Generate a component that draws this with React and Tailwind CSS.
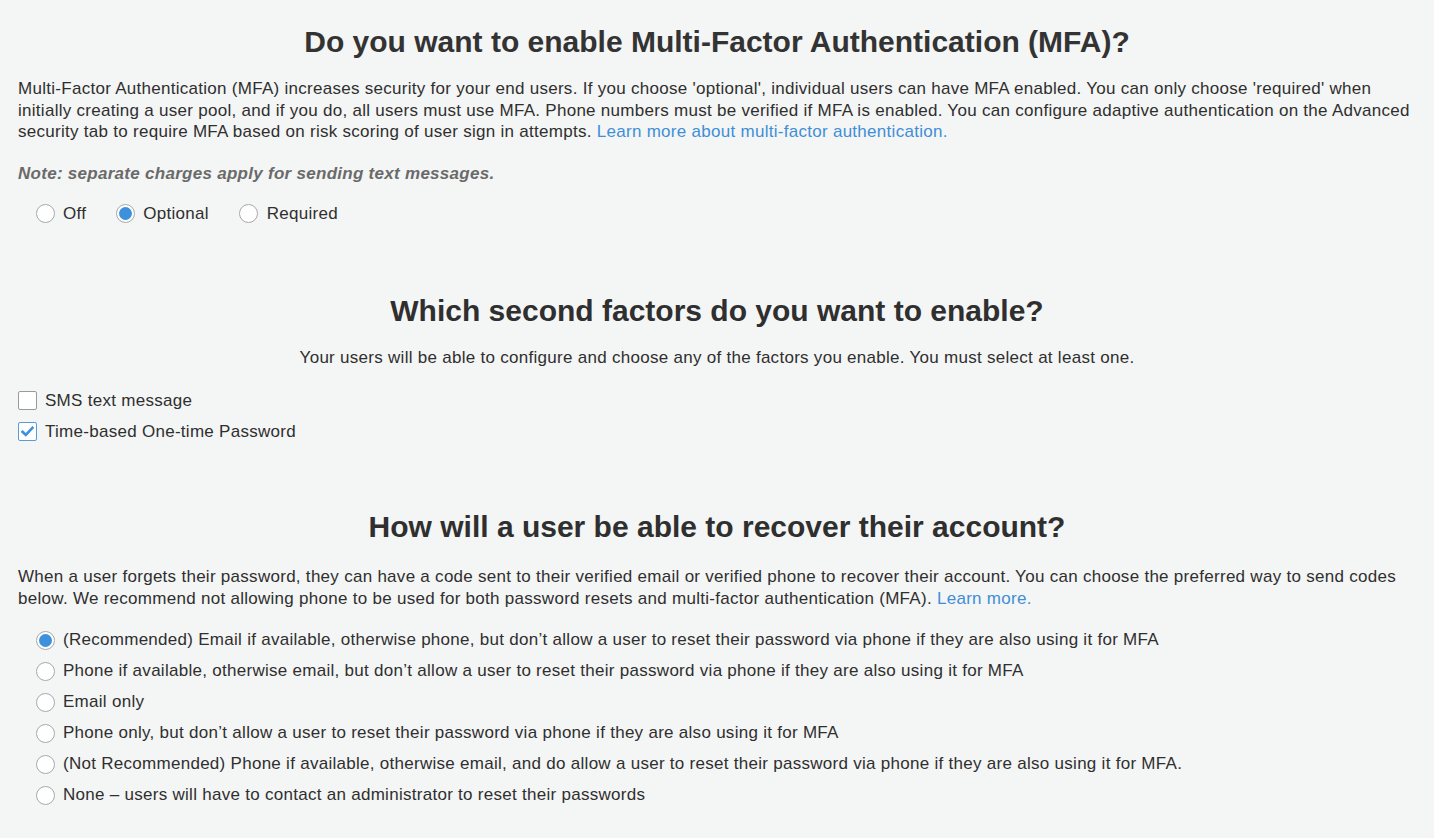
import React from "react";

function Radio({ checked }) {
  return (
    <span className="relative inline-flex h-[19px] w-[19px] shrink-0 items-center justify-center rounded-full border border-[#a8a8a8] bg-white">
      {checked && <span className="h-[13px] w-[13px] rounded-full bg-[#3d91dc]" />}
    </span>
  );
}

function Checkbox({ checked }) {
  return (
    <span
      className={
        "inline-flex h-[19px] w-[19px] shrink-0 items-center justify-center rounded-[2px] border bg-white " +
        (checked ? "border-[#5b9bd8]" : "border-[#9a9a9a]")
      }
    >
      {checked && (
        <svg width="13" height="11" viewBox="0 0 13 11">
          <path d="M1.5 5.8 L4.8 9 L11.5 1.8" fill="none" stroke="#3d91dc" strokeWidth="2.6" strokeLinecap="square" />
        </svg>
      )}
    </span>
  );
}

const recovery = [
  "(Recommended) Email if available, otherwise phone, but don\u2019t allow a user to reset their password via phone if they are also using it for MFA",
  "Phone if available, otherwise email, but don\u2019t allow a user to reset their password via phone if they are also using it for MFA",
  "Email only",
  "Phone only, but don\u2019t allow a user to reset their password via phone if they are also using it for MFA",
  "(Not Recommended) Phone if available, otherwise email, and do allow a user to reset their password via phone if they are also using it for MFA.",
  "None \u2013 users will have to contact an administrator to reset their passwords",
];

export default function App() {
  return (
    <div
      className="min-h-[838px] w-full bg-[#f4f5f5] px-[18px] pt-[25px] text-[17px] leading-[21.5px] tracking-[0.28px] text-[#2f2f2f]"
      style={{ fontFamily: '"Liberation Sans", Arial, sans-serif' }}
    >
      <h1 className="text-center text-[30px] font-bold leading-[34px] tracking-normal text-[#333]">
        Do you want to enable Multi-Factor Authentication (MFA)?
      </h1>
      <p className="mt-[19px]">
        Multi-Factor Authentication (MFA) increases security for your end users. If you choose 'optional', individual users can have MFA enabled. You can only choose 'required' when
        <br />
        initially creating a user pool, and if you do, all users must use MFA. Phone numbers must be verified if MFA is enabled. You can configure adaptive authentication on the Advanced
        <br />
        security tab to require MFA based on risk scoring of user sign in attempts.{" "}
        <span className="text-[#3f8fd6]">Learn more about multi-factor authentication.</span>
      </p>
      <p className="mt-[20.5px] font-bold italic text-[#6a6a6a]">Note: separate charges apply for sending text messages.</p>
      <div className="mt-[18.5px] flex items-center pl-[18px]">
        <label className="flex items-center gap-[8px]">
          <Radio />
          <span>Off</span>
        </label>
        <label className="ml-[30px] flex items-center gap-[8px]">
          <Radio checked />
          <span>Optional</span>
        </label>
        <label className="ml-[30px] flex items-center gap-[9px]">
          <Radio />
          <span>Required</span>
        </label>
      </div>

      <h2 className="mt-[69px] text-center text-[30px] font-bold leading-[34px] tracking-normal">
        Which second factors do you want to enable?
      </h2>
      <p className="mt-[19px] text-center">
        Your users will be able to configure and choose any of the factors you enable. You must select at least one.
      </p>
      <div className="mt-[17px] flex flex-col">
        <label className="flex h-[31px] items-center gap-[8px]">
          <Checkbox />
          <span>SMS text message</span>
        </label>
        <label className="flex h-[31px] items-center gap-[8px]">
          <Checkbox checked />
          <span>Time-based One-time Password</span>
        </label>
      </div>

      <h2 className="mt-[62.5px] text-center text-[30px] font-bold leading-[34px] tracking-normal">
        How will a user be able to recover their account?
      </h2>
      <p className="mt-[22px] leading-[22px]">
        When a user forgets their password, they can have a code sent to their verified email or verified phone to recover their account. You can choose the preferred way to send codes
        <br />
        below. We recommend not allowing phone to be used for both password resets and multi-factor authentication (MFA).{" "}
        <span className="text-[#3f8fd6]">Learn more.</span>
      </p>
      <div className="mt-[15px] flex flex-col pl-[18px]">
        {recovery.map((t, i) => (
          <label key={i} className="flex h-[31px] items-center gap-[8px]">
            <Radio checked={i === 0} />
            <span>{t}</span>
          </label>
        ))}
      </div>
    </div>
  );
}
